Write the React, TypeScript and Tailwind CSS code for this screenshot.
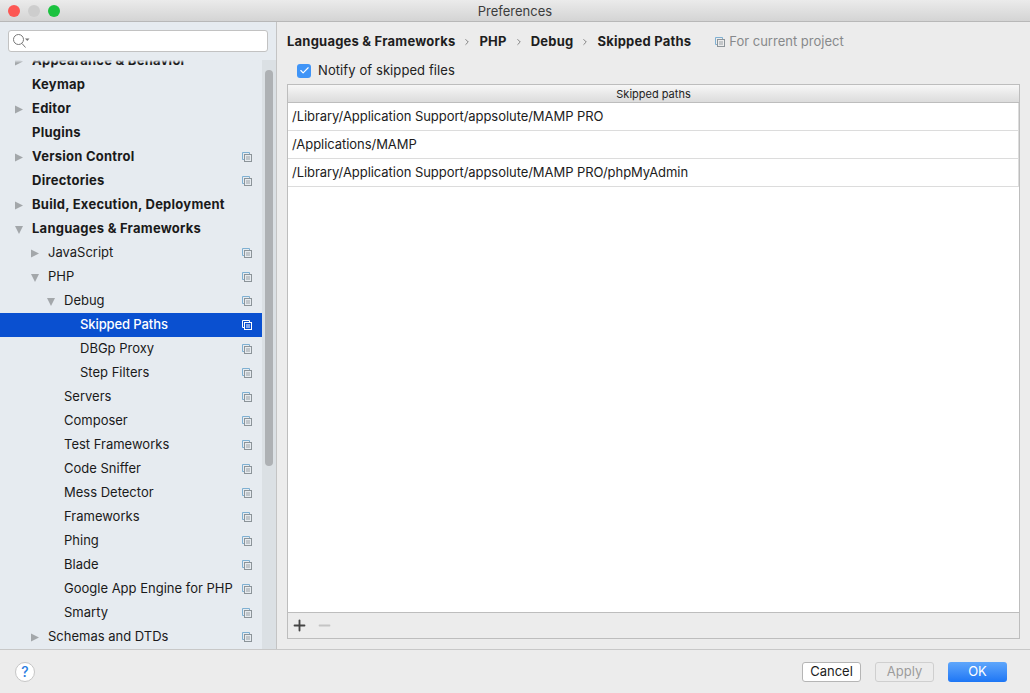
import { Check, Plus, Minus, ChevronRight } from 'lucide-react';

type Row = { label: string; depth: number; arrow?: 'right' | 'down'; bold?: boolean; copy?: boolean; active?: boolean };

const rows: Row[] = [
  { label: 'Appearance & Behavior', depth: 0, arrow: 'right', bold: true },
  { label: 'Keymap', depth: 0, bold: true },
  { label: 'Editor', depth: 0, arrow: 'right', bold: true },
  { label: 'Plugins', depth: 0, bold: true },
  { label: 'Version Control', depth: 0, arrow: 'right', bold: true, copy: true },
  { label: 'Directories', depth: 0, bold: true, copy: true },
  { label: 'Build, Execution, Deployment', depth: 0, arrow: 'right', bold: true },
  { label: 'Languages & Frameworks', depth: 0, arrow: 'down', bold: true },
  { label: 'JavaScript', depth: 1, arrow: 'right', copy: true },
  { label: 'PHP', depth: 1, arrow: 'down', copy: true },
  { label: 'Debug', depth: 2, arrow: 'down', copy: true },
  { label: 'Skipped Paths', depth: 3, copy: true, active: true },
  { label: 'DBGp Proxy', depth: 3, copy: true },
  { label: 'Step Filters', depth: 3, copy: true },
  { label: 'Servers', depth: 2, copy: true },
  { label: 'Composer', depth: 2, copy: true },
  { label: 'Test Frameworks', depth: 2, copy: true },
  { label: 'Code Sniffer', depth: 2, copy: true },
  { label: 'Mess Detector', depth: 2, copy: true },
  { label: 'Frameworks', depth: 2, copy: true },
  { label: 'Phing', depth: 2, copy: true },
  { label: 'Blade', depth: 2, copy: true },
  { label: 'Google App Engine for PHP', depth: 2, copy: true },
  { label: 'Smarty', depth: 2, copy: true },
  { label: 'Schemas and DTDs', depth: 1, arrow: 'right', copy: true },
];

const paths = [
  '/Library/Application Support/appsolute/MAMP PRO',
  '/Applications/MAMP',
  '/Library/Application Support/appsolute/MAMP PRO/phpMyAdmin',
];

const CopyIcon = ({ active }: { active?: boolean }) => (
  <svg width="10" height="10" viewBox="0 0 10 10" fill="none" className="shrink-0">
    <path d="M2.5 7.5H.5V.5h7v2" stroke={active ? '#ffffff' : '#7fb0d2'} />
    <rect x="2.5" y="2.5" width="7" height="7" stroke={active ? '#ffffff' : '#8c9499'} />
    <path d="M4 5h4M4 7h4" stroke={active ? '#ffffff' : '#9aa1a6'} />
  </svg>
);

const Arrow = ({ dir }: { dir: 'right' | 'down' }) => (
  <svg width="8" height="9" viewBox="0 0 8 9" className="shrink-0">
    {dir === 'right' ? <path d="M0 .5l8 4-8 4z" fill="#a3a7aa" /> : <path d="M0 1h8L4 9z" fill="#a3a7aa" />}
  </svg>
);

const TreeRow = ({ row }: { row: Row }) => {
  const indents = ['pl-[15px]', 'pl-[31px]', 'pl-[47px]', 'pl-[63px]'];
  return (
    <div className={`flex h-6 shrink-0 items-center pr-[10px] ${row.active ? 'bg-[#0a50d0] text-white' : 'text-[#1a1a1a]'} ${indents[row.depth]}`}>
      <span className="flex w-[17px] shrink-0 items-center">{row.arrow && <Arrow dir={row.arrow} />}</span>
      <span className={`flex-1 truncate ${row.bold ? 'font-bold tracking-[0.25px]' : row.active ? 'font-medium tracking-[-0.1px]' : ''}`}>{row.label}</span>
      {row.copy && <CopyIcon active={row.active} />}
    </div>
  );
};

const Crumb = ({ children }: { children: string }) => <span className="font-bold tracking-[0.22px] text-[#1e1e1e]">{children}</span>;

const Sep = () => <ChevronRight size={10} strokeWidth={1.5} className="mx-[7px] text-[#444]" />;

export default function App() {
  return (
    <div className="flex h-[693px] w-[1030px] flex-col overflow-hidden bg-[#ececec] font-['Inter',sans-serif] text-[13px]">
      <div className="relative flex h-[22px] shrink-0 items-center justify-center border-b border-[#b8b8b8] bg-gradient-to-b from-[#ebebeb] to-[#d4d4d4] pt-[2px] text-[13px] text-[#3c3c3c]">
        <div className="absolute left-2 top-[5px] flex gap-2">
          <span className="h-3 w-3 rounded-full bg-[#fc5753]" />
          <span className="h-3 w-3 rounded-full bg-[#cdcdcd]" />
          <span className="h-3 w-3 rounded-full bg-[#1bc23f]" />
        </div>
        Preferences
      </div>

      <div className="flex min-h-0 flex-1">
        <div className="flex w-[277px] shrink-0 flex-col border-r border-[#c4c4c4] bg-[#e6ebf0]">
          <div className="h-[38px] shrink-0 pl-2 pr-2 pt-2">
            <div className="flex h-[22px] w-[260px] items-center rounded-[3px] border border-[#c2c2c2] bg-white pl-1">
              <svg width="21" height="15" viewBox="0 0 21 15" fill="none">
                <circle cx="5.5" cy="5.5" r="5" stroke="#777" />
                <path d="M9 9.5L12.5 13.5" stroke="#777" />
                <path d="M12 4.5h4.5l-2.2 2.5z" fill="#777" />
              </svg>
            </div>
          </div>
          <div className="flex min-h-0 flex-1">
            <div className="relative flex min-w-0 flex-1 flex-col overflow-hidden">
              <div className="-mt-[11px] flex flex-col">
                {rows.map((row) => (
                  <TreeRow key={row.label} row={row} />
                ))}
              </div>
              <div className="absolute inset-x-0 top-0 h-[3px] bg-gradient-to-b from-[#e6ebf0] to-transparent" />
            </div>
            <div className="w-[14px] shrink-0 bg-[#dbe0e4] pl-[3px] pt-[10px]">
              <div className="h-[396px] w-2 rounded-full bg-[#aeb1b4]" />
            </div>
          </div>
        </div>

        <div className="flex min-w-0 flex-1 flex-col pl-[10px] pr-[10px]">
          <div className="flex h-[38px] shrink-0 items-center pt-[2px]">
            <Crumb>Languages &amp; Frameworks</Crumb>
            <Sep />
            <Crumb>PHP</Crumb>
            <Sep />
            <Crumb>Debug</Crumb>
            <Sep />
            <Crumb>Skipped Paths</Crumb>
            <span className="ml-6 flex items-center gap-[4px] text-[#87898b]">
              <CopyIcon />
              For current project
            </span>
          </div>
          <div className="flex h-[24px] shrink-0 items-center pb-[3px] pl-[10px]">
            <span className="flex h-[14px] w-[14px] items-center justify-center rounded-[3px] bg-[#3f94f7]">
              <Check size={11} strokeWidth={2.5} className="text-white" />
            </span>
            <span className="ml-[7px] tracking-[0.09px] text-[#222]">Notify of skipped files</span>
          </div>
          <div className="flex h-[555px] flex-col border border-[#bdbdbd] bg-white">
            <div className="flex h-[18px] shrink-0 items-center justify-center border-b border-[#bdbdbd] bg-gradient-to-b from-[#f7f7f7] to-[#dcdcdc] pt-[2px] text-[11px] text-[#222]">
              Skipped paths
            </div>
            <div className="flex-1">
              {paths.map((p) => (
                <div key={p} className="flex h-7 items-center border-b border-r border-[#dcdcdc] pl-1 tracking-[-0.05px] text-[#1c1c1c]">
                  {p}
                </div>
              ))}
            </div>
            <div className="flex h-[26px] shrink-0 items-center gap-2 border-t border-[#bdbdbd] bg-[#ececec] pb-px pl-[3px]">
              <Plus size={17} strokeWidth={2.6} className="text-[#444]" />
              <Minus size={17} strokeWidth={2.6} className="text-[#c4c4c4]" />
            </div>
          </div>
        </div>
      </div>

      <div className="flex h-[44px] shrink-0 items-center justify-between border-t border-[#c8c8c8] pl-[15px] pr-[23px]">
        <div className="flex h-5 w-5 items-center justify-center rounded-full border border-[#c6c6c6] bg-white text-[14px] font-medium text-[#2a7de1]">?</div>
        <div className="flex items-center">
          <button className="flex h-5 w-[59px] items-center justify-center rounded-[3px] border border-[#b5b5b5] bg-white text-[#1c1c1c]">Cancel</button>
          <button className="ml-[14px] flex h-5 w-[59px] items-center justify-center rounded-[3px] border border-[#cfcfcf] bg-[#ececec] text-[#9c9c9c]">Apply</button>
          <button className="ml-[14px] flex h-5 w-[59px] items-center justify-center rounded-[3px] bg-gradient-to-b from-[#5ea6fb] to-[#1c76f5] text-white">OK</button>
        </div>
      </div>
    </div>
  );
}
